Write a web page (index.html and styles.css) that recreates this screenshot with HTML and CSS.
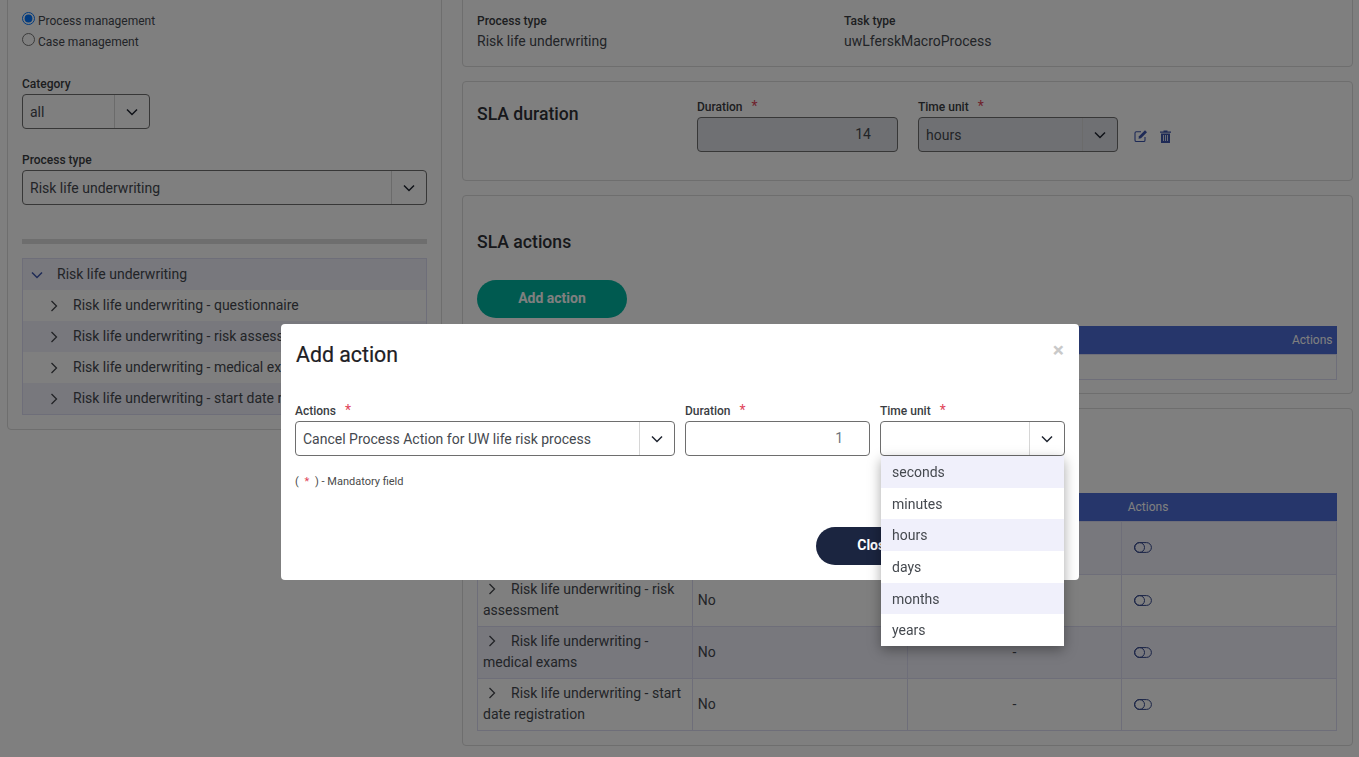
FILE: index.html
```html
<!DOCTYPE html>
<html lang="en">
<head>
<meta charset="utf-8">
<title>SLA configuration</title>
<link rel="stylesheet" href="styles.css">
</head>
<body>
<svg class="defs" width="0" height="0" aria-hidden="true">
  <symbol id="chev-down" viewBox="0 0 12 8"><path d="M1 1.500 6 6.500 11 1.500" fill="none" stroke="currentColor" stroke-width="1.500"/></symbol>
  <symbol id="chev-right" viewBox="0 0 8 12"><path d="M1.500 1 6.500 6 1.500 11" fill="none" stroke="currentColor" stroke-width="1.300"/></symbol>
  <symbol id="toggle" viewBox="0 0 18 11"><rect x=".6" y=".6" width="16.8" height="9.8" rx="4.9" fill="none" stroke="currentColor" stroke-width="1"/><circle cx="5.6" cy="5.5" r="4.9" fill="none" stroke="currentColor" stroke-width="1"/></symbol>
</svg>

<main class="page">
  <aside class="card side">
    <label class="radio"><input type="radio" name="mode" checked><span>Process management</span></label>
    <label class="radio"><input type="radio" name="mode"><span>Case management</span></label>

    <div class="lbl side-first">Category</div>
    <div class="select select-small"><span class="select-val">all</span><span class="select-btn"><svg class="cd"><use href="#chev-down"/></svg></span></div>

    <div class="lbl side-next">Process type</div>
    <div class="select"><span class="select-val">Risk life underwriting</span><span class="select-btn"><svg class="cd"><use href="#chev-down"/></svg></span></div>

    <div class="bar"></div>

    <ul class="tree">
      <li class="tree-row alt"><svg class="tree-open"><use href="#chev-down"/></svg>Risk life underwriting</li>
      <li class="tree-row child"><svg class="cr"><use href="#chev-right"/></svg>Risk life underwriting - questionnaire</li>
      <li class="tree-row child alt"><svg class="cr"><use href="#chev-right"/></svg>Risk life underwriting - risk assessment</li>
      <li class="tree-row child"><svg class="cr"><use href="#chev-right"/></svg>Risk life underwriting - medical exams</li>
      <li class="tree-row child alt"><svg class="cr"><use href="#chev-right"/></svg>Risk life underwriting - start date registration</li>
    </ul>
  </aside>

  <section class="content">
    <div class="card info">
      <div><div class="lbl">Process type</div><div class="val">Risk life underwriting</div></div>
      <div><div class="lbl">Task type</div><div class="val">uwLferskMacroProcess</div></div>
    </div>

    <div class="card duration">
      <h2 class="title title-col">SLA duration</h2>
      <div class="field w201">
        <div class="lbl">Duration<i class="star">*</i></div>
        <div class="input disabled">14</div>
      </div>
      <div class="field w200">
        <div class="lbl">Time unit<i class="star">*</i></div>
        <div class="select disabled"><span class="select-val">hours</span><span class="select-btn"><svg class="cd"><use href="#chev-down"/></svg></span></div>
      </div>
      <div class="tools">
        <svg class="tool-edit" viewBox="0 0 14 14"><path d="M11 8v3.200c0 .9-.6 1.300-1.300 1.300H2.300C1.500 12.500 1 12 1 11.200V4c0-.8.5-1.300 1.300-1.300H7" fill="none" stroke="currentColor" stroke-width="1.100"/><path d="M4.500 9.800 5 7.300 11 1.300l2 2-6 6z" fill="currentColor"/></svg>
        <svg class="tool-trash" viewBox="0 0 11 13"><path d="M3.500 1.500V.5h4v1H11v1.300H0V1.500z M1 3.500h9V13H1z" fill="currentColor"/><path d="M3.500 5v6M5.500 5v6M7.500 5v6" stroke="#fff" stroke-width=".8"/></svg>
      </div>
    </div>

    <div class="card actions">
      <h2 class="title">SLA actions</h2>
      <button class="pill teal" type="button">Add action</button>
      <table class="grid grid-actions">
        <thead><tr><th>Action</th><th>Duration</th><th>Time unit</th><th class="right">Actions</th></tr></thead>
        <tbody><tr><td colspan="4"></td></tr></tbody>
      </table>
    </div>

    <div class="card tasks">
      <h2 class="title">SLA tasks</h2>
      <table class="grid grid-tasks">
        <thead><tr><th>Task</th><th>Enabled</th><th>Duration</th><th class="th-act">Actions</th></tr></thead>
        <tbody>
          <tr class="alt first"><td><svg class="cr row-cr"><use href="#chev-right"/></svg>Risk life underwriting - questionnaire</td><td>No</td><td class="mid">-</td><td class="act"><svg class="tg"><use href="#toggle"/></svg></td></tr>
          <tr><td><svg class="cr row-cr"><use href="#chev-right"/></svg>Risk life underwriting - risk assessment</td><td>No</td><td class="mid">-</td><td class="act"><svg class="tg"><use href="#toggle"/></svg></td></tr>
          <tr class="alt"><td><svg class="cr row-cr"><use href="#chev-right"/></svg>Risk life underwriting - medical exams</td><td>No</td><td class="mid">-</td><td class="act"><svg class="tg"><use href="#toggle"/></svg></td></tr>
          <tr><td><svg class="cr row-cr"><use href="#chev-right"/></svg>Risk life underwriting - start date registration</td><td>No</td><td class="mid">-</td><td class="act"><svg class="tg"><use href="#toggle"/></svg></td></tr>
        </tbody>
      </table>
    </div>
  </section>
</main>

<div class="backdrop"></div>

<div class="modal" role="dialog" aria-label="Add action">
  <button class="close" type="button">×</button>
  <h1 class="modal-title">Add action</h1>
  <div class="modal-fields">
    <div class="field f-actions">
      <div class="lbl">Actions<i class="star">*</i></div>
      <div class="select"><span class="select-val">Cancel Process Action for UW life risk process</span><span class="select-btn"><svg class="cd"><use href="#chev-down"/></svg></span></div>
    </div>
    <div class="field f-dur">
      <div class="lbl">Duration<i class="star">*</i></div>
      <div class="input muted">1</div>
    </div>
    <div class="field f-unit">
      <div class="lbl">Time unit<i class="star">*</i></div>
      <div class="select"><span class="select-val"></span><span class="select-btn"><svg class="cd"><use href="#chev-down"/></svg></span></div>
      <ul class="menu">
        <li class="alt">seconds</li>
        <li>minutes</li>
        <li class="alt">hours</li>
        <li>days</li>
        <li class="alt">months</li>
        <li>years</li>
      </ul>
    </div>
  </div>
  <p class="note">( <i class="star-note">*</i> ) - Mandatory field</p>
  <div class="modal-foot">
    <button class="pill navy" type="button">Close</button>
  </div>
</div>
</body>
</html>
```

FILE: styles.css
```css
* { box-sizing: border-box; }

html, body {
  margin: 0;
  height: 100%;
  overflow: hidden;
  background: #fff;
}

body {
  font-family: Roboto, "Liberation Sans", sans-serif;
  font-size: 14px;
  line-height: 21px;
  color: #45494f;
}

.defs { position: absolute; }

.page {
  display: flex;
  align-items: flex-start;
  gap: 20px;
  margin-top: -10px;
  padding-left: 7px;
}

.card {
  border: 1px solid #dcdcdc;
  border-radius: 4px;
  background: #fff;
}

/* Left column */
.side {
  flex: 0 0 435px;
  padding: 20px 14px 14px;
}

.radio {
  display: flex;
  align-items: flex-start;
  height: 21px;
  font-size: 12px;
  line-height: 20px;
}

.radio input {
  width: 13px;
  height: 13px;
  margin: 1px 3px 0 0;
}

.lbl {
  height: 18px;
  font-size: 12px;
  line-height: 18px;
  font-weight: 500;
  color: #3a3d42;
}

.side-first { margin-top: 22px; margin-bottom: 1px; }
.side-next { margin-top: 22px; margin-bottom: 1px; }

.select, .input {
  height: 35px;
  border: 1px solid #6e6e6e;
  border-radius: 4px;
  background: #fff;
}

.select {
  display: flex;
  align-items: stretch;
}

.select-small { width: 128px; }

.select-val {
  flex: 1;
  min-width: 0;
  padding-left: 7px;
  line-height: 34px;
  white-space: nowrap;
}

.select-btn {
  flex: 0 0 35px;
  display: flex;
  align-items: center;
  justify-content: center;
  border-left: 1px solid #d6d6d6;
  color: #1f2430;
}

.cd { width: 12px; height: 8px; }
.cr { width: 8px; height: 12px; color: #44464c; }

.bar {
  height: 5px;
  margin-top: 34px;
  background: #dcdcdc;
}

.tree {
  list-style: none;
  margin: 14px 0 0;
  padding: 0;
  border: 1px solid #dcdcf2;
}

.tree-row {
  display: flex;
  align-items: center;
  height: 31px;
  padding-left: 8px;
  white-space: nowrap;
  overflow: hidden;
}

.tree-open {
  width: 12px;
  height: 8px;
  margin-right: 14px;
  color: #3d55ad;
}

.child { padding-left: 27px; }
.child .cr { margin-right: 15px; }

.alt { background: #f0f0fb; }

/* Right column */
.content {
  flex: 0 0 891px;
  display: flex;
  flex-direction: column;
  gap: 14px;
}

.info {
  display: grid;
  grid-template-columns: 367px 1fr;
  padding: 21px 14px 14px;
}

.val { margin-top: 1px; }

.title {
  margin: 0;
  font-size: 17.6px;
  line-height: 34px;
  font-weight: 500;
  color: #2f3136;
}

.duration {
  display: flex;
  gap: 20px;
  height: 100px;
  padding: 15px 14px 0;
}

.title-col { flex: 0 0 200px; }

.field { position: relative; }
.w200 { flex: 0 0 200px; }
.w201 { flex: 0 0 201px; }

.field .lbl { margin-bottom: 2px; }

.star {
  margin-left: 9px;
  font-style: normal;
  font-size: 14px;
  font-weight: 400;
  color: #e0455a;
}

.input {
  padding-right: 26px;
  text-align: right;
  line-height: 33px;
}

.disabled { background: #dfe1e6; }
.muted { color: #6c757d; }

.tools {
  display: flex;
  align-items: center;
  gap: 12px;
  height: 14px;
  margin: 32px 0 0 -4px;
  color: #3d55ad;
}

.tool-edit { width: 14px; height: 14px; }
.tool-trash { width: 11px; height: 13px; }

.actions { padding: 29px 14px 14px; height: 199px; }

.pill {
  display: block;
  height: 38px;
  padding: 0 0 2px;
  border: 0;
  border-radius: 19px;
  font: 700 14px Roboto, "Liberation Sans", sans-serif;
  color: #fff;
}

.teal { background: #00b5a0; }
.actions .pill { width: 150px; margin-top: 21px; }

.grid {
  width: 860px;
  table-layout: fixed;
  border-collapse: collapse;
  font-size: 14px;
}

.grid th {
  height: 28px;
  padding: 2px 4px 0 5px;
  font-size: 12px;
  font-weight: 400;
  text-align: left;
  color: #fff;
  background: #4c6cd6;
}

.grid th.right { text-align: right; }
.grid th.th-act { padding-left: 6px; }

.grid td {
  padding: 4px 5px;
  border: 1px solid #dcdcf2;
  vertical-align: middle;
}

.grid-actions { margin-top: 8px; }
.grid-actions td { height: 25px; padding: 0; }

.tasks { height: 338px; padding: 29px 14px 0; }
.grid-tasks { margin-top: 21px; }
.grid-tasks td { height: 52px; }
.grid-tasks .first td { height: 53px; }
.grid-tasks .mid { text-align: center; }
.grid-tasks .act { padding-left: 12px; }

.row-cr { margin: 0 15px 0 5px; vertical-align: -1px; }

.tg {
  display: block;
  width: 18px;
  height: 11px;
  color: #32468c;
}

/* Overlay */
.backdrop {
  position: fixed;
  inset: 0;
  background: rgba(0, 0, 0, .5);
}

.modal {
  position: fixed;
  top: 324px;
  left: 281px;
  width: 798px;
  height: 256px;
  padding: 16px 14px 0;
  border-radius: 4px;
  background: #fff;
}

.close {
  position: absolute;
  top: 16px;
  right: 15px;
  padding: 0;
  border: 0;
  background: none;
  font: 700 21px/21px Roboto, "Liberation Sans", sans-serif;
  color: #c9c9c9;
}

.modal-title {
  margin: 0 0 0 1px;
  font-size: 21.3px;
  line-height: 30px;
  font-weight: 400;
  color: #1d2024;
  -webkit-text-stroke: .2px #1d2024;
}

.modal-fields {
  display: flex;
  gap: 10px;
  margin-top: 31px;
}

.f-actions { flex: 0 0 380px; }
.f-dur { flex: 0 0 185px; }
.f-unit { flex: 0 0 185px; }

.menu {
  position: absolute;
  top: 100%;
  left: 1px;
  right: 1px;
  z-index: 2;
  margin: 0;
  padding: 0;
  list-style: none;
  background: #fff;
  box-shadow: 0 4px 12px rgba(0, 0, 0, .35);
}

.menu li {
  height: 31.67px;
  padding-left: 11px;
  line-height: 33px;
}

.note {
  margin: 18px 0 0;
  font-size: 11px;
  line-height: 16px;
  color: #4a4a4a;
}

.star-note {
  margin: 0 3px;
  font-style: normal;
  color: #e0455a;
}

.modal-foot {
  display: flex;
  justify-content: flex-start;
  margin: 37px 0 0 521px;
}

.navy { width: 118px; background: #1b2540; }
```
